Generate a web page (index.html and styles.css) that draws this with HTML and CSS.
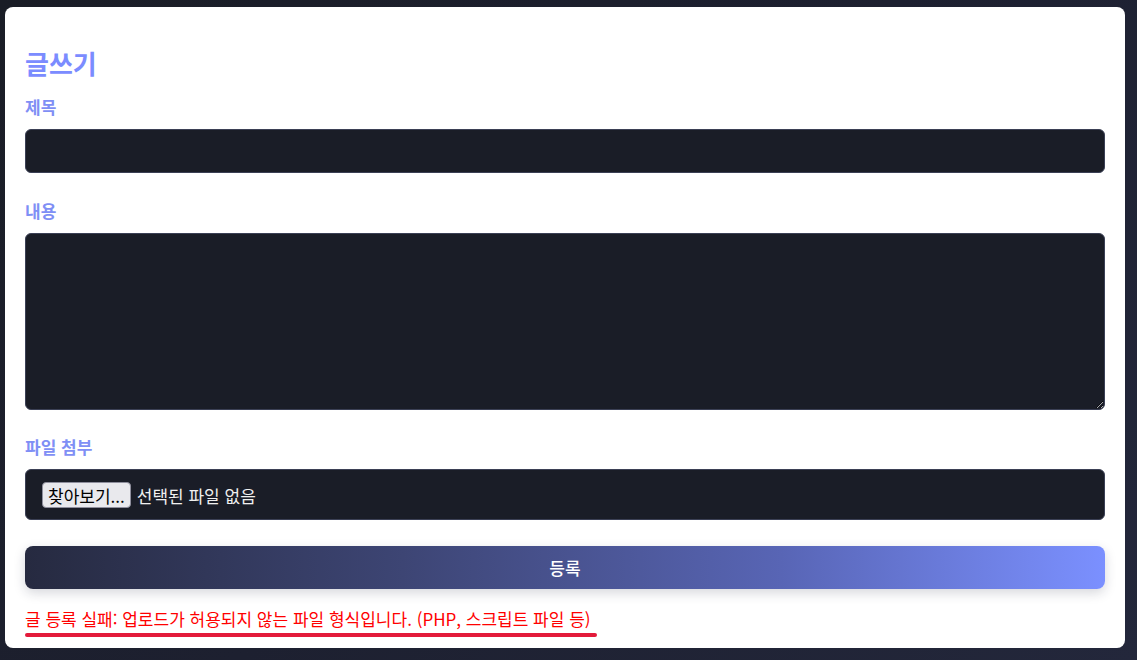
FILE: index.html
```html
<!DOCTYPE html>
<html lang="ko">
<head>
<meta charset="utf-8">
<title>글쓰기</title>
<link rel="stylesheet" href="styles.css">
</head>
<body>
<div class="card">
  <h2 class="title">글쓰기</h2>
  <form class="form">
    <div class="group">
      <label class="label" for="subject">제목</label>
      <input class="field" id="subject" type="text">
    </div>
    <div class="group">
      <label class="label" for="content">내용</label>
      <textarea class="field area" id="content"></textarea>
    </div>
    <div class="group">
      <label class="label">파일 첨부</label>
      <div class="filebox">
        <span class="filebtn">찾아보기...</span>
        <span class="filename">선택된 파일 없음</span>
      </div>
    </div>
    <button class="submit" type="button">등록</button>
  </form>
  <p class="error"><span class="error-text">글 등록 실패: 업로드가 허용되지 않는 파일 형식입니다. (PHP, 스크립트 파일 등)</span></p>
</div>
</body>
</html>
```
FILE: styles.css
```css
html, body {
  margin: 0;
  height: 100%;
}
body {
  background: linear-gradient(135deg, #1a1d26 0%, #1d2030 50%, #23273b 100%);
  padding: 7px 12px 0 5px;
  box-sizing: border-box;
  font-family: "Noto Sans CJK KR", "Noto Sans", sans-serif;
}
.card {
  background: #ffffff;
  border-radius: 8px;
  padding: 20px 20px 11px 20px;
}
.title {
  margin: 20px 0 16px;
  font-size: 26px;
  line-height: 32px;
  font-weight: 700;
  color: #7b8cff;
}
.form {
  display: flex;
  flex-direction: column;
}
.group {
  display: flex;
  flex-direction: column;
  margin-bottom: 25.5px;
}
.label {
  font-size: 17px;
  line-height: 23px;
  font-weight: 600;
  color: #7f8ff5;
  margin-bottom: 11px;
}
.field {
  box-sizing: border-box;
  height: 44px;
  background: #1a1d27;
  border: 1px solid #3b4055;
  border-radius: 6px;
  color: #e8e8e8;
  font-family: inherit;
  font-size: 17px;
  padding: 8px 12px;
  outline: none;
}
.area {
  height: 177px;
  resize: both;
}
.filebox {
  box-sizing: border-box;
  height: 51px;
  background: #1a1d27;
  border: 1px solid #3b4055;
  border-radius: 6px;
  display: flex;
  align-items: center;
  padding: 1px 16px 0;
  gap: 6px;
}
.filebtn {
  box-sizing: border-box;
  height: 26px;
  display: flex;
  align-items: center;
  padding: 0 5px;
  background: #e9e9ed;
  border: 1px solid #8f8f9d;
  border-radius: 4px;
  color: #000;
  font-size: 17px;
}
.filename {
  color: #f0f0f0;
  font-size: 17px;
}
.submit {
  height: 43px;
  border: none;
  border-radius: 8px;
  background: linear-gradient(90deg, #262a40 0%, #3d4574 35%, #5865b5 70%, #7b90ff 100%);
  box-shadow: 0 4px 12px rgba(30, 35, 60, 0.18);
  color: #ffffff;
  font-family: inherit;
  font-size: 17px;
  font-weight: 500;
  margin-top: 0.5px;
}
.error {
  display: flex;
  margin: 18px 0 0;
  font-size: 17px;
  line-height: 23px;
  color: #ff0000;
}
.error-text {
  position: relative;
  padding-bottom: 7px;
}
.error-text::after {
  content: "";
  position: absolute;
  left: 0;
  right: -6px;
  bottom: 0;
  height: 4px;
  border-radius: 2px;
  background: #e31a3a;
}
```
